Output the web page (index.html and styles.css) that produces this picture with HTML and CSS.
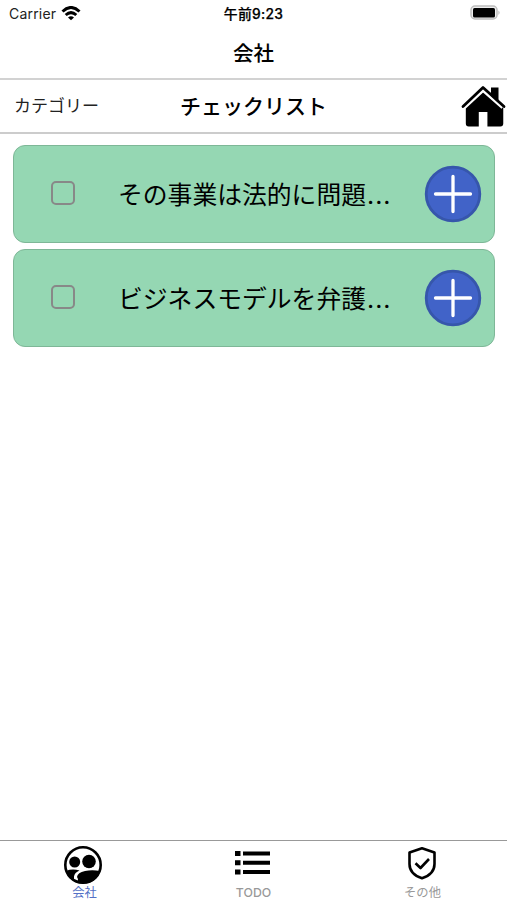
FILE: index.html
```html
<!DOCTYPE html>
<html lang="ja">
<head>
<meta charset="utf-8">
<title>会社</title>
<link rel="stylesheet" href="styles.css">
</head>
<body>
<div class="app">
  <div class="status">
    <div class="carrier"><span>Carrier</span>
      <svg class="wifi" width="20" height="15" viewBox="0 0 20 15" fill="none" stroke="#000" stroke-width="3"><path d="M1.500 5.500Q10-2.500 18.500 5.500M4.700 9Q10 4.300 15.300 9"/><path d="M7 11.500Q10 8.800 13 11.500L10 14.200Z" fill="#000" stroke="none"/></svg>
    </div>
    <div class="time">午前9:23</div>
    <div class="power">
      <svg width="31" height="16" viewBox="0 0 31 16"><rect x="1" y="1" width="26" height="13" rx="4" fill="#eee" stroke="#bdbdbd" stroke-width="1.500"/><rect x="3" y="3" width="22" height="9.500" rx="1.500"/><path d="M28.500 5.500q2 2 0 4.500z" fill="#aaa"/></svg>
    </div>
  </div>
  <header class="title">会社</header>
  <div class="toolbar">
    <div class="category">カテゴリー</div>
    <h1 class="heading">チェックリスト</h1>
    <div class="home">
      <svg width="45" height="42" viewBox="0 0 45 42"><path d="M22.500 6L4.500 22.500V38.500q0 3 3 3h10.500V27h9V41.500h13.500q3 0 3-3V22.500z" transform="translate(.5 0) scale(.96 1)"/><path d="M2.500 21.500L22 3.500L42.500 21.500" fill="none" stroke="#fff" stroke-width="6"/><path d="M30 2.500h7.500v14L30 9z"/><path d="M2 21.500L22 2.500L43 21.500" fill="none" stroke="#000" stroke-width="2.800" stroke-linecap="round" stroke-linejoin="round"/></svg>
    </div>
  </div>
  <main class="list">
    <div class="card">
      <span class="check"></span>
      <span class="label">その事業は法的に問題<span class="dots">...</span></span>
      <svg class="add" width="58" height="58" viewBox="0 0 58 58"><circle cx="29" cy="29" r="26.800" fill="#4163c8" stroke="#3656ab" stroke-width="2.800"/><path d="M11.500 29h35M29 11.500v35" stroke="#fff" stroke-width="3.300" stroke-linecap="round"/></svg>
    </div>
    <div class="card">
      <span class="check"></span>
      <span class="label">ビジネスモデルを弁護<span class="dots">...</span></span>
      <svg class="add" width="58" height="58" viewBox="0 0 58 58"><circle cx="29" cy="29" r="26.800" fill="#4163c8" stroke="#3656ab" stroke-width="2.800"/><path d="M11.500 29h35M29 11.500v35" stroke="#fff" stroke-width="3.300" stroke-linecap="round"/></svg>
    </div>
  </main>
  <nav class="tabs">
    <div class="tab active">
      <svg width="40" height="40" viewBox="0 0 40 40"><circle cx="20" cy="20" r="17.700" fill="#fff" stroke="#000" stroke-width="2.600"/><circle cx="11.700" cy="17" r="5.500"/><circle cx="26" cy="16.500" r="6.800"/><path d="M3 26q6-2.500 13.500-.5Q11.500 27.500 11 31.500L11 35.500Q5 33 3 26z"/><path d="M14 38Q16 35 14 32Q14.500 27.500 22 26Q29 24.500 37 26Q34 38 20 38.500z"/></svg>
      <span>会社</span>
    </div>
    <div class="tab">
      <svg width="40" height="40" viewBox="0 0 40 40"><path d="M3 6h5.500v5H3zM11 6.500h27v4H11zM3 15.300h5.500v5H3zM11 15.800h27v4H11zM3 24.600h5.500v5H3zM11 25.100h27v4H11z"/></svg>
      <span class="latin">TODO</span>
    </div>
    <div class="tab">
      <svg width="40" height="40" viewBox="0 0 40 40" fill="none" stroke="#000" stroke-width="2.600" stroke-linejoin="round"><path d="M21 3.200L33.500 7.500V19C33.500 27 28 31 21 33.200C14 31 8.500 27 8.500 19V7.500Z"/><path d="M14.500 18.200l5 4.800 8.500-9"/></svg>
      <span>その他</span>
    </div>
  </nav>
</div>
</body>
</html>
```
FILE: styles.css
```css
* { box-sizing: border-box; }
body { margin: 0; background: #fff; color: #000; font-family: Inter, "Noto Sans CJK JP", sans-serif; }
svg { display: block; flex: none; }
.app { height: 900px; display: flex; flex-direction: column; }
.status { height: 28px; display: grid; grid-template-columns: 1fr auto 1fr; font-size: 14px; line-height: 28px; }
.carrier { display: flex; padding-left: 9px; gap: 5px; color: #222; letter-spacing: 0.2px; }
.wifi { margin-top: 6px; }
.time { font-weight: 500; font-size: 13.8px; letter-spacing: 0.3px; -webkit-text-stroke: 0.25px #000; }
.power { display: flex; justify-content: flex-end; padding: 5px 6px 0 0; }
.title { height: 50px; line-height: 51px; text-align: center; font-size: 20.5px; font-weight: 500; }
.toolbar { height: 56px; border-top: 2px solid #d2d2d2; border-bottom: 2px solid #ccc; display: grid; grid-template-columns: 1fr auto 1fr; line-height: 53px; }
.category { padding-left: 14px; font-size: 17px; color: #222; }
.heading { margin: 0; font-size: 21px; font-weight: 500; }
.home { display: flex; justify-content: flex-end; padding: 5px 1px 0 0; }
.list { flex: 1; padding: 11px 12px 0 13px; display: flex; flex-direction: column; gap: 6px; }
.card { height: 98px; display: flex; align-items: center; padding: 0 12px 0 37px; background: #95d7b3; border: 1px solid #7eb797; border-radius: 12px; }
.check { width: 24px; height: 24px; margin-top: -2px; border: 2px solid #888; border-radius: 5px; }
.label { flex: 1; margin-left: 43px; margin-top: 1px; font-size: 24.8px; line-height: 36px; white-space: nowrap; }
.dots { letter-spacing: 1px; margin-left: 1px; }
.tabs { height: 60px; border-top: 1px solid #999; display: grid; grid-template-columns: repeat(3, 1fr); color: #999; font-size: 12.3px; }
.tab { display: flex; flex-direction: column; align-items: center; padding-top: 4px; line-height: 15px; }
.tab svg { margin-right: 3px; }
.active { color: #5370c6; }
.latin { font-weight: 500; }
```
